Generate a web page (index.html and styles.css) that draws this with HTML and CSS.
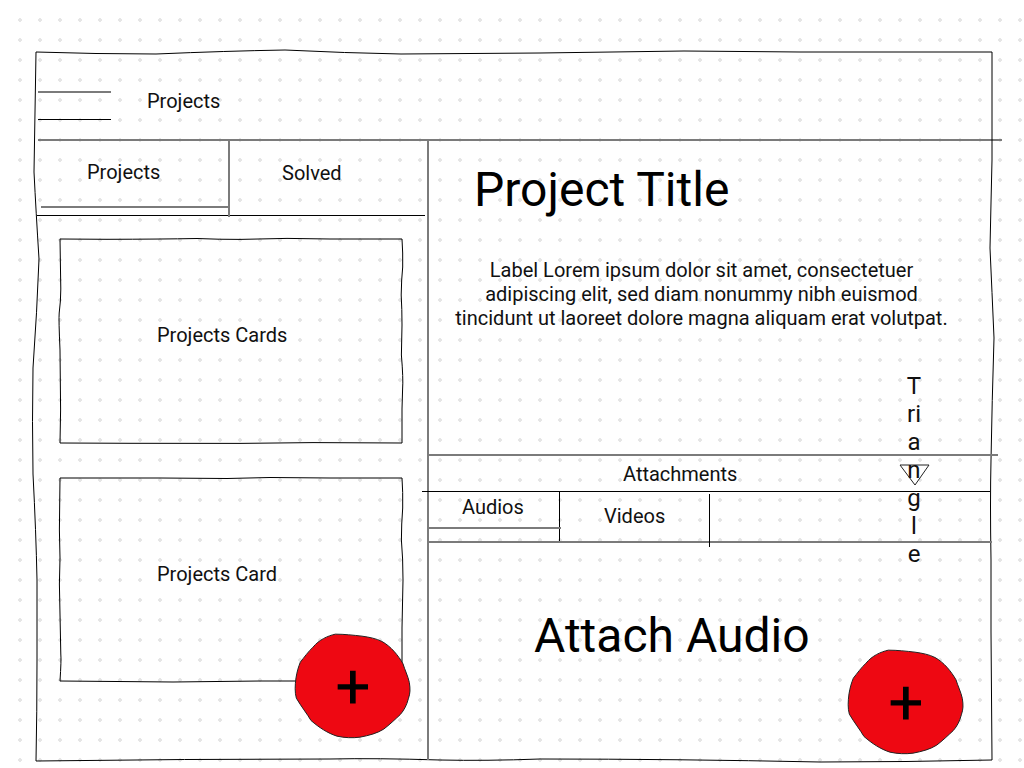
FILE: index.html
```html
<!DOCTYPE html>
<html lang="en">
<head>
<meta charset="utf-8">
<meta name="viewport" content="width=device-width, initial-scale=1">
<title>Projects</title>
<link rel="stylesheet" href="styles.css">
</head>
<body>
<svg class="paper" aria-hidden="true">
  <defs>
    <pattern id="dots" x="10" y="10" width="20" height="20" patternUnits="userSpaceOnUse">
      <path d="M9 8h2v1h1v2h-1v1h-2v-1h-1v-2h1z"/>
    </pattern>
    <symbol id="add" viewBox="0 0 345 311" overflow="visible">
      <path class="blob" d="M121 0C148 0 175 3 201 6C223 9 243 13 261 22C288 37 309 63 324 89C329 106 339 126 343 145C346 165 346 177 340 194C335 213 328 227 316 241C300 256 283 272 266 285C247 297 222 304 195 309C172 312 149 311 126 306C98 297 72 280 48 259C37 240 18 216 4 192C-1 175 0 153 3 131C6 112 11 96 16 84C27 70 41 51 54 39C72 17 98 5 121 0Z"/>
      <path d="M165 110h17v40h37v16h-37v42h-17v-42h-37v-16h37z"/>
    </symbol>
  </defs>
  <rect x="10" y="10" width="100%" height="100%" fill="url(#dots)"/>
</svg>
<div class="frame">
  <svg class="outline" viewBox="0 0 956 708" preserveAspectRatio="none" aria-hidden="true">
    <path d="M0 0Q60 2 120 2Q190 -1 249 -2Q310 1 365 2L504 1L648 -1L764 0L956 0L956 108Q955 150 954 196Q956 240 958 286Q956 350 955 408Q954 450 955 508L955 580L956 708Q870 710 784 710Q640 707 504 707Q450 709 404 708Q340 706 294 707Q150 707 0 709Q1 660 1 608L1 528Q0 480 -3 422Q-4 370 -3 316Q1 260 3 207Q0 160 -2 120Z"/>
  </svg>

  <header class="topbar">
    <button class="menu" type="button" aria-label="Menu"></button>
    <span class="label">Projects</span>
  </header>

  <main class="columns">
    <section class="sidebar" aria-label="Project list">
      <nav class="tabs">
        <div class="tab tab-active"><button type="button">Projects</button></div>
        <div class="tab"><button type="button">Solved</button></div>
      </nav>
      <div class="cards">
        <article class="card">
          <svg class="outline" viewBox="0 0 342 204" preserveAspectRatio="none" aria-hidden="true">
            <path d="M0 0L47 .3Q100 .2 137 -.5Q160 .5 180 .4L227 -.6L270 0L342 0Q343 14 342.7 28Q341.4 40 341.2 56Q342 70 342 86L341.4 116Q343.4 140 342.6 150L342 170L342 204L253 203.6L180 204.4L70 204.3L0 204L.6 171L0 111Q-1.4 80 -.8 74Q.8 62 .8 50Z"/>
          </svg>
          Projects Cards
        </article>
        <article class="card">
          <svg class="outline" viewBox="0 0 342 204" preserveAspectRatio="none" aria-hidden="true">
            <path d="M0 0L100 0L167 .5L210 -.5L270 0L342 0Q343 14 342.7 30Q341.4 46 341.4 62Q343 80 343 102L342 150L342 203L200 203L113 204L0 203Q1.4 182 .8 176L-.6 106L0 80L-.6 52Z"/>
          </svg>
          Projects Card
        </article>
      </div>
      <button class="fab fab-project" type="button" aria-label="Add project"><svg><use href="#add"/></svg></button>
    </section>

    <section class="detail">
      <div class="summary">
        <h1>Project Title</h1>
        <p>Label Lorem ipsum dolor sit amet, consectetuer adipiscing elit, sed diam nonummy nibh euismod tincidunt ut laoreet dolore magna aliquam erat volutpat.</p>
      </div>
      <div class="attachments">
        <span>Attachments</span>
        <div class="toggle">
          <svg viewBox="0 0 29 20" aria-hidden="true"><path d="M0 1H29L15 21Z"/></svg>
          <span class="toggle-label">Triangle</span>
        </div>
      </div>
      <nav class="media">
        <div class="medium medium-active"><button type="button">Audios</button></div>
        <div class="medium medium-last"><button type="button">Videos</button></div>
      </nav>
      <div class="panel">
        <h2>Attach Audio</h2>
        <button class="fab fab-audio" type="button" aria-label="Add audio"><svg><use href="#add"/></svg></button>
      </div>
    </section>
  </main>
</div>
</body>
</html>
```

FILE: styles.css
```css
* {
  box-sizing: border-box;
}

:root {
  --soft: #7b7b7b;
  --ink: #000;
}

body {
  position: relative;
  margin: 0;
  min-height: 100vh;
  display: flex;
  font: 20px/24px Roboto, "Liberation Sans", sans-serif;
  color: #111;
  background: #fff;
}

button {
  display: block;
  padding: 0;
  border: 0;
  background: none;
  font: inherit;
  color: inherit;
  text-align: left;
  cursor: pointer;
}

h1,
h2 {
  margin: 0;
  font-size: 48px;
  line-height: 56px;
  font-weight: 400;
  color: var(--ink);
}

p {
  margin: 0;
}

/* dotted drawing paper */
.paper {
  position: absolute;
  inset: 0;
  z-index: -1;
  width: 100%;
  height: 100%;
}

.paper pattern path {
  fill: #e6e6e6;
}

.frame {
  position: relative;
  flex: 1;
  display: flex;
  flex-direction: column;
  margin: 52px 32px 8px 36px;
}

.outline {
  position: absolute;
  inset: 0;
  width: 100%;
  height: 100%;
  overflow: visible;
  pointer-events: none;
}

.outline path {
  fill: none;
  stroke: var(--ink);
  stroke-width: 1;
  vector-effect: non-scaling-stroke;
}

.topbar {
  display: flex;
  align-items: flex-start;
  gap: 36px;
  margin: 0 -10px 0 2px;
  padding: 37px 0 19px;
  border-bottom: 2px solid var(--soft);
}

.menu {
  width: 73px;
  height: 29px;
  margin-top: 2px;
  border-top: 2px solid var(--soft);
  border-bottom: 1px solid var(--ink);
}

.columns {
  flex: 1;
  display: grid;
  grid-template-columns: 393fr 563fr;
}

.sidebar {
  position: relative;
  border-right: 2px solid var(--soft);
}

.tabs {
  display: grid;
  grid-template-columns: 193fr 195fr;
  height: 75px;
  margin: 0 2px 0 1px;
  border-bottom: 1px solid var(--ink);
}

.tab button {
  width: 100%;
  height: 67px;
  padding: 0 0 4px 52px;
}

.tab-active {
  padding-left: 4px;
  margin-bottom: -2px;
  border-right: 2px solid var(--soft);
}

.tab-active button {
  padding-left: 46px;
  border-bottom: 2px solid var(--soft);
}

.cards {
  display: grid;
  gap: 35px;
  padding: 23px 25px 24px 24px;
}

.card {
  position: relative;
  min-height: 204px;
  padding: 84px 24px 24px 97px;
}

.fab {
  position: absolute;
  width: 115px;
  height: 104px;
}

.fab svg {
  display: block;
  width: 100%;
  height: 100%;
  overflow: visible;
}

.blob {
  fill: #ee0812;
  stroke: #222;
  stroke-width: 3;
}

.fab-project {
  right: 17px;
  bottom: 22px;
}

.fab-audio {
  right: 29px;
  bottom: 6px;
}

.detail {
  position: relative;
  display: flex;
  flex-direction: column;
}

.summary {
  min-height: 315px;
  margin: 0 -6px 0 -2px;
  padding: 21px 47px 24px 25px;
  border-bottom: 2px solid var(--soft);
}

.summary h1 {
  padding-left: 22px;
}

.summary p {
  margin-top: 40px;
  text-align: center;
}

.attachments {
  display: flex;
  align-items: center;
  justify-content: space-between;
  height: 36px;
  margin: 0 2px 0 -7px;
  padding: 0 61px 0 201px;
  border-bottom: 1px solid var(--ink);
}

.toggle {
  position: relative;
  width: 29px;
}

.toggle svg {
  display: block;
  width: 29px;
  height: 20px;
  overflow: visible;
}

.toggle path {
  fill: none;
  stroke: #222;
}

/* the label runs down over the arrow, one or two letters to a line */
.toggle-label {
  position: absolute;
  top: -92px;
  left: 6px;
  width: 16px;
  font-size: 24px;
  line-height: 28px;
  text-align: center;
  word-break: break-all;
}

.media {
  display: flex;
  height: 51px;
  margin-left: -2px;
  border-bottom: 2px solid var(--soft);
}

.medium {
  border-right: 1px solid var(--ink);
}

.medium button {
  width: 149px;
  height: 44px;
  padding-left: 44px;
}

.medium-active {
  padding-left: 2px;
}

.medium-active button {
  width: 132px;
  height: 37px;
  margin-right: -2px;
  padding: 0 0 5px 33px;
  border-bottom: 2px solid var(--soft);
}

.medium-last {
  margin: 2px 0 -6px;
}

.panel {
  position: relative;
  flex: 1;
  padding: 65px 24px 24px 105px;
}
```
